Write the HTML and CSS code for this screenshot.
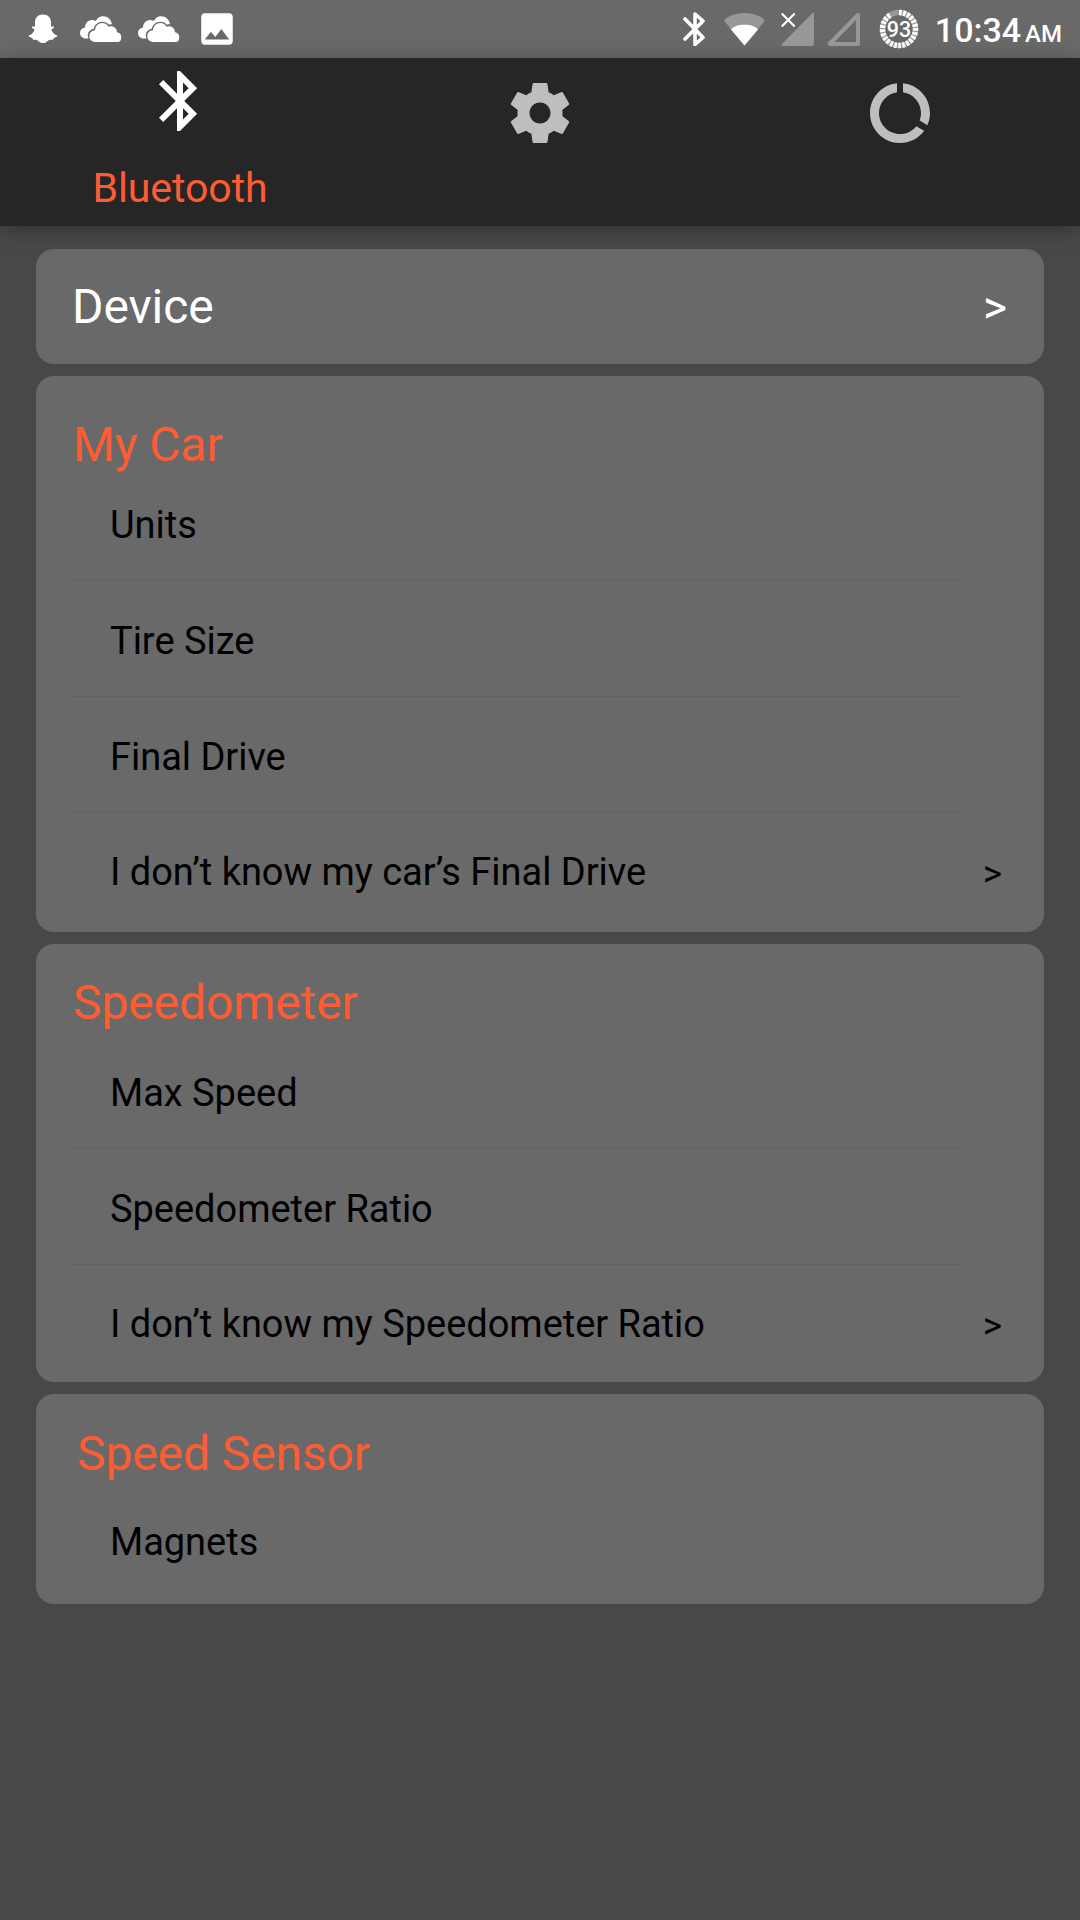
FILE: index.html
```html
<!DOCTYPE html>
<html lang="en">
<head>
<meta charset="utf-8">
<title>Settings</title>
<link rel="stylesheet" href="styles.css">
</head>
<body>
<div class="status">
  <div class="notifications">
    <svg width="30" height="30" viewBox="0 0 30 30" fill="#fff"><path d="M15 .5c5 0 8 3.200 8 8v4c1 .3 2-.4 3 .2.600.8-1.300 2-2.600 2.600.6 3 2.600 5 5.800 6.200.6 1.400-2 2-3.400 2.500-.6.600-.4 1.700-1.300 1.900-1.600-.1-3.200-.3-4.600 1C18.400 28 17 29 15 29s-3.400-1-4.900-2.100c-1.400-1.300-3-1.100-4.600-1-.9-.2-.7-1.300-1.300-1.900-1.400-.5-4-1.100-3.400-2.500 3.200-1.200 5.200-3.200 5.800-6.200C5.300 14.700 3.400 13.500 4 12.700c1-.6 2 .1 3-.2v-4c0-4.800 3-8 8-8z"/></svg>
    <svg width="42" height="27" viewBox="0 0 42 27" fill="#fff"><use href="#clouds"/></svg>
    <svg width="42" height="27" viewBox="0 0 42 27" fill="#fff"><g id="clouds"><path d="M8.500 22.500H6C2.500 22.500 0 20 0 17c0-3 2-5 5-5.500C5 7 8.500 4 12 4c1.500 0 2.700.4 3.800 1C17.300 2 20 .2 23.200.2c4.400 0 8.200 3.300 8.800 8.200-1.400-.2-2.200 0-3 .3-1.700-2-4-3-6.700-3-4.200 0-7.600 2.800-8.500 7-3.700.7-6 3.400-6 6.800 0 1.100.2 2.100.7 3z"/><path d="M15.500 26C12 26 9.300 23.600 9.300 20.200c0-3.300 2.400-5.700 5.700-5.900.2-4 3.300-7.200 7.300-7.200 2.800 0 5 1.400 6.300 3.700 4-1.700 8.300 1 8.400 5.400 2.500.3 4.300 2.300 4.300 4.900 0 2.700-1 4.900-3 4.900z"/></g></svg>
    <svg class="photo" width="42" height="42" viewBox="0 0 24 24" fill="#fff"><path d="M21 19V5c0-1.100-.9-2-2-2H5c-1.100 0-2 .9-2 2v14c0 1.100.9 2 2 2h14c1.100 0 2-.9 2-2zM8.500 13.500l2.500 3.010L14.500 12l4.500 6H5l3.500-4.500z"/></svg>
  </div>
  <div class="system">
    <svg width="22" height="34" viewBox="0 0 22 34" fill="none" stroke="#fff" stroke-width="3.600" stroke-linecap="round" stroke-linejoin="round"><path d="M2 7l18 18.500-8 7V2l8 7L2 27"/></svg>
    <svg width="41" height="33" viewBox="0 0 41 33"><path fill="#989898" d="M20.500 32.500L.3 8C1 4 11 0 20.500 0S40 4 40.700 8z"/><path fill="#fff" d="M20.500 32.500L7 16.500c3-3.500 8-4.800 13.500-4.800S31 13 34 16.500z"/></svg>
    <svg width="33" height="34" viewBox="0 0 33 34"><path fill="#989898" d="M31.500 1Q33 0 33 2v30q0 2-2 2H2q-3 0-1-2z"/><path stroke="#696969" stroke-width="5" d="M1 2l13 13M14 2L1 15"/><path stroke="#fff" stroke-width="2.200" d="M.7 1.500l13 13M13.700 1.500l-13 13"/></svg>
    <svg width="33" height="34" viewBox="0 0 33 34"><path fill="none" stroke="#989898" stroke-width="4" stroke-linejoin="round" d="M31 3v29H2.500z"/></svg>
    <svg class="battery" width="40" height="40" viewBox="0 0 40 40"><circle cx="20" cy="20" r="16.500" fill="none" stroke="#989898" stroke-width="5.500"/><circle cx="20" cy="20" r="16.500" fill="none" stroke="#fff" stroke-width="5.500" pathLength="100" stroke-dasharray="2.800 1.200 2.800 1.200 2.800 1.200 2.800 1.200 2.800 1.200 2.800 1.200 2.800 1.200 2.800 1.200 2.800 1.200 2.800 1.200 2.800 1.200 2.800 1.200 2.800 1.200 2.800 1.200 2.800 1.200 2.800 1.200 2.800 1.200 2.800 1.200 2.800 1.200 2.800 1.200 2.800 1.200 2.800 1.200 2.800 10" transform="rotate(-90 20 20)"/><text class="level" x="20" y="28" text-anchor="middle">93</text></svg>
    <div class="clock">10:34<span class="ampm">AM</span></div>
  </div>
</div>
<nav class="tabs">
  <div class="tab active">
    <svg width="72" height="72" viewBox="0 0 24 24" fill="#fff"><path d="M17.710 7.710L12 2h-1v7.590L6.410 5 5 6.410 10.590 12 5 17.590 6.410 19 11 14.410V22h1l5.710-5.710-4.300-4.290 4.300-4.290zM13 5.830l1.880 1.880L13 9.590V5.830zm1.880 10.460L13 18.170v-3.760l1.880 1.880z"/></svg>
    <span class="tab-label">Bluetooth</span>
  </div>
  <div class="tab">
    <svg width="72" height="72" viewBox="0 0 24 24" fill="#bebebe"><path d="M19.430 12.980c.04-.32.07-.64.07-.98s-.03-.66-.07-.98l2.110-1.650c.19-.15.240-.42.120-.64l-2-3.460c-.12-.22-.39-.3-.61-.22l-2.490 1c-.52-.4-1.080-.73-1.690-.98l-.38-2.650C14.460 2.180 14.250 2 14 2h-4c-.25 0-.46.180-.49.420l-.38 2.650c-.61.250-1.170.590-1.690.98l-2.490-1c-.23-.09-.49 0-.61.220l-2 3.460c-.13.220-.07.490.12.640l2.110 1.650c-.04.320-.07.650-.07.980s.03.660.07.980l-2.110 1.650c-.19.150-.24.420-.12.640l2 3.460c.12.220.39.300.61.220l2.490-1c.52.400 1.080.730 1.690.980l.38 2.650c.03.240.24.420.49.420h4c.25 0 .46-.18.490-.42l.38-2.650c.61-.25 1.170-.59 1.690-.98l2.490 1c.23.090.49 0 .61-.22l2-3.460c.12-.22.070-.49-.12-.64l-2.110-1.650zM12 15.500c-1.930 0-3.500-1.570-3.500-3.500s1.570-3.500 3.500-3.500 3.500 1.570 3.500 3.500-1.570 3.500-3.500 3.500z"/></svg>
  </div>
  <div class="tab">
    <svg width="72" height="72" viewBox="0 0 24 24" fill="#bebebe"><path d="M13 2.050v3.030c3.390.49 6 3.390 6 6.920 0 .9-.18 1.750-.48 2.540l2.600 1.530c.56-1.240.88-2.620.88-4.070 0-5.180-3.950-9.450-9-9.950zM12 19c-3.870 0-7-3.130-7-7 0-3.530 2.610-6.430 6-6.920V2.050c-5.060.5-9 4.760-9 9.950 0 5.520 4.470 10 9.990 10 3.310 0 6.240-1.610 8.060-4.090l-2.600-1.530C16.170 17.980 14.210 19 12 19z"/></svg>
  </div>
</nav>
<main class="content">
  <section class="card device"><span>Device</span><span class="more">&gt;</span></section>
  <section class="card car">
    <h2 class="title">My Car</h2>
    <div class="row">Units</div>
    <div class="row">Tire Size</div>
    <div class="row">Final Drive</div>
    <div class="row">I don’t know my car’s Final Drive<span class="more">&gt;</span></div>
  </section>
  <section class="card speedometer">
    <h2 class="title">Speedometer</h2>
    <div class="row">Max Speed</div>
    <div class="row">Speedometer Ratio</div>
    <div class="row">I don’t know my Speedometer Ratio<span class="more">&gt;</span></div>
  </section>
  <section class="card sensor">
    <h2 class="title">Speed Sensor</h2>
    <div class="row">Magnets</div>
  </section>
</main>
</body>
</html>
```
FILE: styles.css
```css
* { box-sizing: border-box; }
body {
  margin: 0;
  width: 1080px;
  height: 1920px;
  background: #484848;
  font-family: Roboto, sans-serif;
  color: #000;
  overflow: hidden;
}
svg { display: block; flex: none; }

.status {
  height: 58px;
  background: #696969;
  display: flex;
  justify-content: space-between;
  padding: 0 18px 0 28px;
}
.notifications, .system { display: flex; align-items: center; }
.notifications { gap: 16px; }
.notifications svg:first-child { margin-right: 6px; }
.system { gap: 13px; }
.system svg:first-child { margin-right: 6px; }
.system svg:nth-child(2) { margin-right: 3px; }
.battery { margin-left: 6px; }
.level { font: 500 21.5px Roboto, sans-serif; fill: #fff; }
.clock {
  color: #fff;
  font-size: 34px;
  font-weight: 500;
  line-height: 52px;
  padding-top: 6px;
  margin-left: 3px;
  white-space: nowrap;
}
.ampm { font-size: 24px; margin-left: 4px; }

.tabs {
  position: relative;
  height: 168px;
  background: #262626;
  display: grid;
  grid-template-columns: repeat(3, 1fr);
  box-shadow: 0 4px 20px rgba(0, 0, 0, .3);
}
.tab { display: flex; flex-direction: column; align-items: center; padding-top: 19px; }
.tab.active { padding-top: 7px; }
.tab-label { color: #ff5c33; font-size: 41px; line-height: 50px; margin-top: 26px; letter-spacing: -.05px; }

.content { display: flex; flex-direction: column; gap: 12px; padding: 23px 36px 0; }
.card { background: #696969; border-radius: 18px; }
.device {
  height: 115px;
  display: flex;
  align-items: center;
  justify-content: space-between;
  padding: 0 37px 0 36px;
  color: #fff;
  font-size: 48px;
  letter-spacing: -.1px;
}
.device .more { font-size: 46px; }
.title {
  margin: 0;
  height: 89px;
  padding: 38px 37px 0;
  font-size: 48px;
  font-weight: 400;
  line-height: 41px;
  letter-spacing: -.1px;
  color: #ff5c33;
}
.car { padding-bottom: 3px; }
.car .title { padding-top: 48px; }
.speedometer { padding-bottom: 1px; }
.sensor { padding-bottom: 5px; }
.sensor .title { padding-left: 41px; padding-top: 39px; }
.row {
  height: 116px;
  margin: 0 84px 0 36px;
  padding: 4px 0 0 38px;
  border-bottom: 1px solid #606060;
  font-size: 38px;
  letter-spacing: -.02px;
  display: flex;
  align-items: center;
  justify-content: space-between;
}
.row:last-child { border-bottom: 0; padding-top: 2px; margin-right: 42px; }
.row .more { font-size: 37px; padding-top: 2px; }
```
